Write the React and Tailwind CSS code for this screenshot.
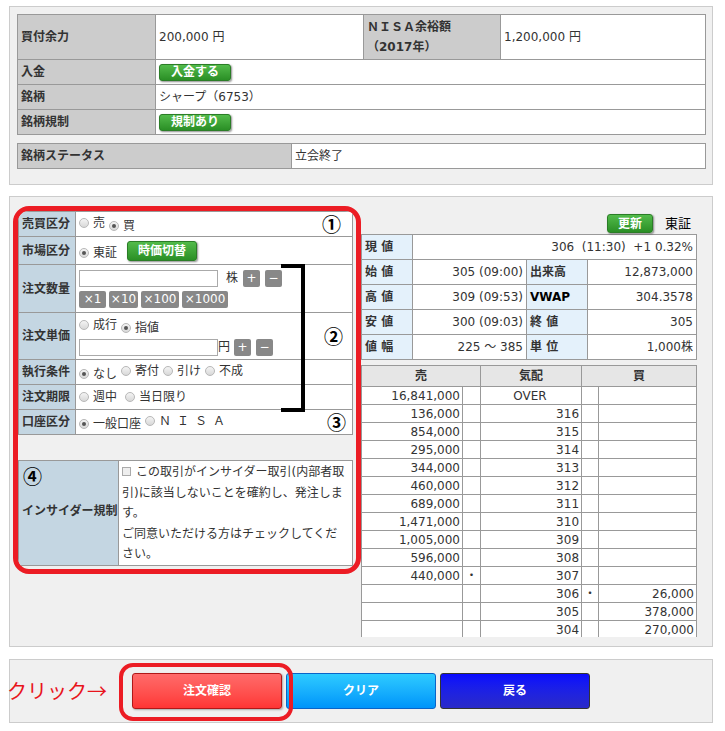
import React from "react";

const Radio = ({ checked, children, mr = "mr-[4px]" }) => (
    <span className={`inline-flex items-center ${mr}`}>
        <span className="mr-[4px] flex h-[10px] w-[10px] items-center justify-center rounded-full border border-[#b8b8b8] bg-linear-to-b from-[#f4f4f4] to-[#d8d8d8]">
            {checked && <span className="h-[4px] w-[4px] rounded-full bg-[#555]" />}
        </span>
        {children}
    </span>
)

const GreenBtn = ({ children, w = "w-[72px]", h = "h-[17px]" }) => (
    <span className={`inline-flex ${w} ${h} items-center justify-center rounded-[3px] border border-[#2b7d27] bg-linear-to-b from-[#52bb4a] to-[#2a8f25] text-[12px] font-bold text-white shadow-[1px_1px_2px_rgba(0,0,0,0.45)]`}>
        {children}
    </span>
)

const GrayBtn = ({ children, w }) => (
    <span className={`inline-flex ${w} h-[17px] items-center justify-center rounded-[2px] bg-[#888] text-[12px] text-white`}>
        {children}
    </span>
)

const Circled = ({ children }) => (
    <span className="font-['Noto_Sans_CJK_JP'] text-[19px] leading-[20px] font-bold text-black">{children}</span>
)

const book = [
    ["16,841,000", "", "OVER", "", ""],
    ["136,000", "", "316", "", ""],
    ["854,000", "", "315", "", ""],
    ["295,000", "", "314", "", ""],
    ["344,000", "", "313", "", ""],
    ["460,000", "", "312", "", ""],
    ["689,000", "", "311", "", ""],
    ["1,471,000", "", "310", "", ""],
    ["1,005,000", "", "309", "", ""],
    ["596,000", "", "308", "", ""],
    ["440,000", "・", "307", "", ""],
    ["", "", "306", "・", "26,000"],
    ["", "", "305", "", "378,000"],
    ["", "", "304", "", "270,000"],
]

export default function App() {
    const th = "border border-[#999] bg-[#ccc] px-[3px] text-left font-bold"
    const td = "border border-[#999] px-[3px]"
    const fl = "border border-[#999] bg-[#c4d6e2] pl-[3px] pr-0 text-left font-bold whitespace-nowrap"
    const fv = "border border-[#999] bg-white pl-[3px]"
    const pl = "border border-[#999] bg-[#e4f1fb] pl-[3px] text-left font-bold whitespace-nowrap"
    const pv = "border border-[#999] bg-white pr-[3px] text-right whitespace-nowrap"
    const bc = "border border-[#999] whitespace-nowrap"

    return (
        <div className="min-h-[731px] w-[725px] bg-white pt-[6px] font-['DejaVu_Sans','Noto_Sans_CJK_JP',sans-serif] text-[12px] leading-[16px] text-[#333]">

            {/* account / stock info */}
            <div className="ml-[9px] w-[704px] border border-[#ccc] bg-[#f0f0f0] px-[7px] pt-[7px] pb-[15px]">
                <table className="w-[689px] table-fixed border-collapse bg-white">
                    <colgroup>
                        <col className="w-[138px]" />
                        <col className="w-[208px]" />
                        <col className="w-[137px]" />
                        <col />
                    </colgroup>
                    <tbody>
                        <tr className="h-[45px]">
                            <th className={th}>買付余力</th>
                            <td className={td}>200,000 円</td>
                            <th className={`${th} leading-[20px]`}>ＮＩＳＡ余裕額<br />（2017年）</th>
                            <td className={td}>1,200,000 円</td>
                        </tr>
                        <tr className="h-[25px]">
                            <th className={th}>入金</th>
                            <td className={td} colSpan={3}><GreenBtn>入金する</GreenBtn></td>
                        </tr>
                        <tr className="h-[25px]">
                            <th className={th}>銘柄</th>
                            <td className={td} colSpan={3}>シャープ（6753）</td>
                        </tr>
                        <tr className="h-[25px]">
                            <th className={th}>銘柄規制</th>
                            <td className={td} colSpan={3}><GreenBtn>規制あり</GreenBtn></td>
                        </tr>
                    </tbody>
                </table>
                <table className="mt-[8px] w-[689px] table-fixed border-collapse bg-white">
                    <colgroup>
                        <col className="w-[274px]" />
                        <col />
                    </colgroup>
                    <tbody>
                        <tr className="h-[25px]">
                            <th className={th}>銘柄ステータス</th>
                            <td className={td}>立会終了</td>
                        </tr>
                    </tbody>
                </table>
            </div>

            {/* order form + board */}
            <div className="mt-[11px] ml-[9px] flex w-[704px] items-start border border-[#ccc] bg-[#f0f0f0] pt-[9px] pb-[9px] pl-[3px]">

                <div className="relative h-[368px] w-[348px] overflow-hidden rounded-[16px] border-[5px] border-[#ec1c24]">
                    <table className="w-[335px] table-fixed border-collapse border-t border-t-[#4a2a9c]">
                        <colgroup>
                            <col className="w-[57px]" />
                            <col />
                        </colgroup>
                        <tbody>
                            <tr className="h-[25px]">
                                <th className={fl}>売買区分</th>
                                <td className={fv}>
                                    <div className="flex items-center justify-between pr-[11px]">
                                        <span><Radio>売</Radio><Radio checked>買</Radio></span>
                                        <Circled>①</Circled>
                                    </div>
                                </td>
                            </tr>
                            <tr className="h-[28px]">
                                <th className={fl}>市場区分</th>
                                <td className={fv}>
                                    <Radio checked mr="mr-[10px]">東証</Radio>
                                    <GreenBtn w="w-[70px]" h="h-[20px]">時価切替</GreenBtn>
                                </td>
                            </tr>
                            <tr className="h-[48px]">
                                <th className={fl}>注文数量</th>
                                <td className={fv}>
                                    <div className="flex items-center">
                                        <span className="h-[17px] w-[139px] border border-[#aaa] bg-white" />
                                        <span className="ml-[8px] mr-[5px]">株</span>
                                        <GrayBtn w="w-[17px]">+</GrayBtn>
                                        <span className="ml-[5px]"><GrayBtn w="w-[17px]">−</GrayBtn></span>
                                    </div>
                                    <div className="mt-[4px] flex gap-[3px]">
                                        <GrayBtn w="w-[27px]">×1</GrayBtn>
                                        <GrayBtn w="w-[29px]">×10</GrayBtn>
                                        <GrayBtn w="w-[38px]">×100</GrayBtn>
                                        <GrayBtn w="w-[46px]">×1000</GrayBtn>
                                    </div>
                                </td>
                            </tr>
                            <tr className="h-[47px]">
                                <th className={fl}>注文単価</th>
                                <td className={fv}>
                                    <div className="flex items-center justify-between pr-[9px]">
                                        <div>
                                            <div><Radio>成行</Radio><Radio checked>指値</Radio></div>
                                            <div className="mt-[3px] flex items-center">
                                                <span className="h-[17px] w-[139px] border border-[#aaa] bg-white" />
                                                <span className="mr-[4px]">円</span>
                                                <GrayBtn w="w-[17px]">+</GrayBtn>
                                                <span className="ml-[5px]"><GrayBtn w="w-[17px]">−</GrayBtn></span>
                                            </div>
                                        </div>
                                        <Circled>②</Circled>
                                    </div>
                                </td>
                            </tr>
                            <tr className="h-[25px]">
                                <th className={fl}>執行条件</th>
                                <td className={fv}>
                                    <Radio checked>なし</Radio><Radio>寄付</Radio><Radio>引け</Radio><Radio>不成</Radio>
                                </td>
                            </tr>
                            <tr className="h-[25px]">
                                <th className={fl}>注文期限</th>
                                <td className={fv}>
                                    <Radio mr="mr-[8px]">週中</Radio><Radio>当日限り</Radio>
                                </td>
                            </tr>
                            <tr className="h-[25px]">
                                <th className={fl}>口座区分</th>
                                <td className={fv}>
                                    <div className="flex items-center justify-between pr-[6px]">
                                        <span><Radio checked>一般口座</Radio><Radio><span className="tracking-[6px]">ＮＩＳＡ</span></Radio></span>
                                        <Circled>③</Circled>
                                    </div>
                                </td>
                            </tr>
                        </tbody>
                    </table>

                    <table className="mt-[25px] w-[335px] table-fixed border-collapse">
                        <colgroup>
                            <col className="w-[100px]" />
                            <col />
                        </colgroup>
                        <tbody>
                            <tr className="h-[105px]">
                                <th className="border border-[#999] bg-[#c4d6e2] px-[3px] pt-[5px] text-left align-top">
                                    <div className="pl-[1px]"><Circled>④</Circled></div>
                                    <div className="mt-[13px] text-[12px] leading-[20px] font-bold whitespace-nowrap">インサイダー規制</div>
                                </th>
                                <td className="border border-[#999] bg-white px-[3px] pt-[1px] align-top leading-[20.5px]">
                                    <span className="mr-[5px] inline-block h-[9px] w-[9px] border border-[#aaa] bg-[#eee]" />
                                    この取引がインサイダー取引(内部者取引)に該当しないことを確約し、発注します。<br />
                                    ご同意いただける方はチェックしてください。
                                </td>
                            </tr>
                        </tbody>
                    </table>

                    {/* bracket annotation */}
                    <div className="absolute top-[53px] left-[263px] h-[148px] w-[24px] border-t-[4px] border-r-[4px] border-b-[4px] border-black" />
                </div>

                <div className="mt-[8px] w-[336px]">
                    <div className="flex items-center justify-end pr-[6px]">
                        <GreenBtn w="w-[46px]" h="h-[19px]">更新</GreenBtn>
                        <span className="ml-[12px] text-[13px] text-black">東証</span>
                    </div>
                    <table className="mt-[1px] w-[336px] table-fixed border-collapse">
                        <colgroup>
                            <col className="w-[51px]" />
                            <col className="w-[114px]" />
                            <col className="w-[61px]" />
                            <col />
                        </colgroup>
                        <tbody>
                            <tr className="h-[25px]">
                                <th className={pl}>現&nbsp;値</th>
                                <td className={pv} colSpan={3}>306 &nbsp;(11:30) &nbsp;+1 0.32%</td>
                            </tr>
                            <tr className="h-[25px]">
                                <th className={pl}>始&nbsp;値</th>
                                <td className={pv}>305 (09:00)</td>
                                <th className={pl}>出来高</th>
                                <td className={pv}>12,873,000</td>
                            </tr>
                            <tr className="h-[25px]">
                                <th className={pl}>高&nbsp;値</th>
                                <td className={pv}>309 (09:53)</td>
                                <th className={`${pl} text-black`}>VWAP</th>
                                <td className={pv}>304.3578</td>
                            </tr>
                            <tr className="h-[25px]">
                                <th className={pl}>安&nbsp;値</th>
                                <td className={pv}>300 (09:03)</td>
                                <th className={pl}>終&nbsp;値</th>
                                <td className={pv}>305</td>
                            </tr>
                            <tr className="h-[25px]">
                                <th className={pl}>値&nbsp;幅</th>
                                <td className={pv}>225 ～ 385</td>
                                <th className={pl}>単&nbsp;位</th>
                                <td className={pv}>1,000株</td>
                            </tr>
                        </tbody>
                    </table>

                    <div className="mt-[5px] h-[272px] overflow-hidden">
                        <table className="w-[336px] table-fixed border-collapse">
                            <colgroup>
                                <col className="w-[101px]" />
                                <col className="w-[18px]" />
                                <col className="w-[101px]" />
                                <col className="w-[17px]" />
                                <col />
                            </colgroup>
                            <thead>
                                <tr className="h-[21px] bg-[#e6e6e6]">
                                    <th className={`${bc} font-bold`} colSpan={2}>売</th>
                                    <th className={`${bc} font-bold`}>気配</th>
                                    <th className={`${bc} font-bold`} colSpan={2}>買</th>
                                </tr>
                            </thead>
                            <tbody className="bg-white">
                                {book.map((r, i) => (
                                    <tr key={i} className="h-[18px] leading-[16px]">
                                        <td className={`${bc} pr-[2px] text-right`}>{r[0]}</td>
                                        <td className={`${bc} text-center`}>{r[1]}</td>
                                        <td className={`${bc} pr-[2px] ${r[2] === "OVER" ? "text-center" : "text-right"}`}>{r[2]}</td>
                                        <td className={`${bc} text-center`}>{r[3]}</td>
                                        <td className={`${bc} pr-[2px] text-right`}>{r[4]}</td>
                                    </tr>
                                ))}
                            </tbody>
                        </table>
                    </div>
                </div>
            </div>

            {/* action buttons */}
            <div className="mt-[12px] ml-[9px] flex h-[64px] w-[704px] items-center border border-[#ccc] bg-[#f0f0f0]">
                <span className="-ml-[3px] w-[125px] font-['Noto_Sans_CJK_JP'] text-[20px] leading-[24px] text-[#e8141c]">クリック→</span>
                <span className="relative">
                    <button className="h-[36px] w-[150px] rounded-[3px] border border-[#b01818] bg-linear-to-b from-[#ff6a6a] to-[#ff3434] text-[12px] font-bold text-white shadow-[1px_1px_2px_rgba(0,0,0,0.3)]">注文確認</button>
                    <span className="absolute -top-[10px] -left-[13px] h-[58px] w-[174px] rounded-[14px] border-[4px] border-[#ec1c24]" />
                </span>
                <button className="ml-[4px] h-[36px] w-[150px] rounded-[3px] border border-[#0a64c8] bg-linear-to-b from-[#2ecbff] to-[#0094fa] text-[12px] font-bold text-white">クリア</button>
                <button className="ml-[4px] h-[36px] w-[150px] rounded-[3px] border border-[#333] bg-linear-to-b from-[#0808ff] to-[#2a2ac8] text-[12px] font-bold text-white">戻る</button>
            </div>
        </div>
    )
}
